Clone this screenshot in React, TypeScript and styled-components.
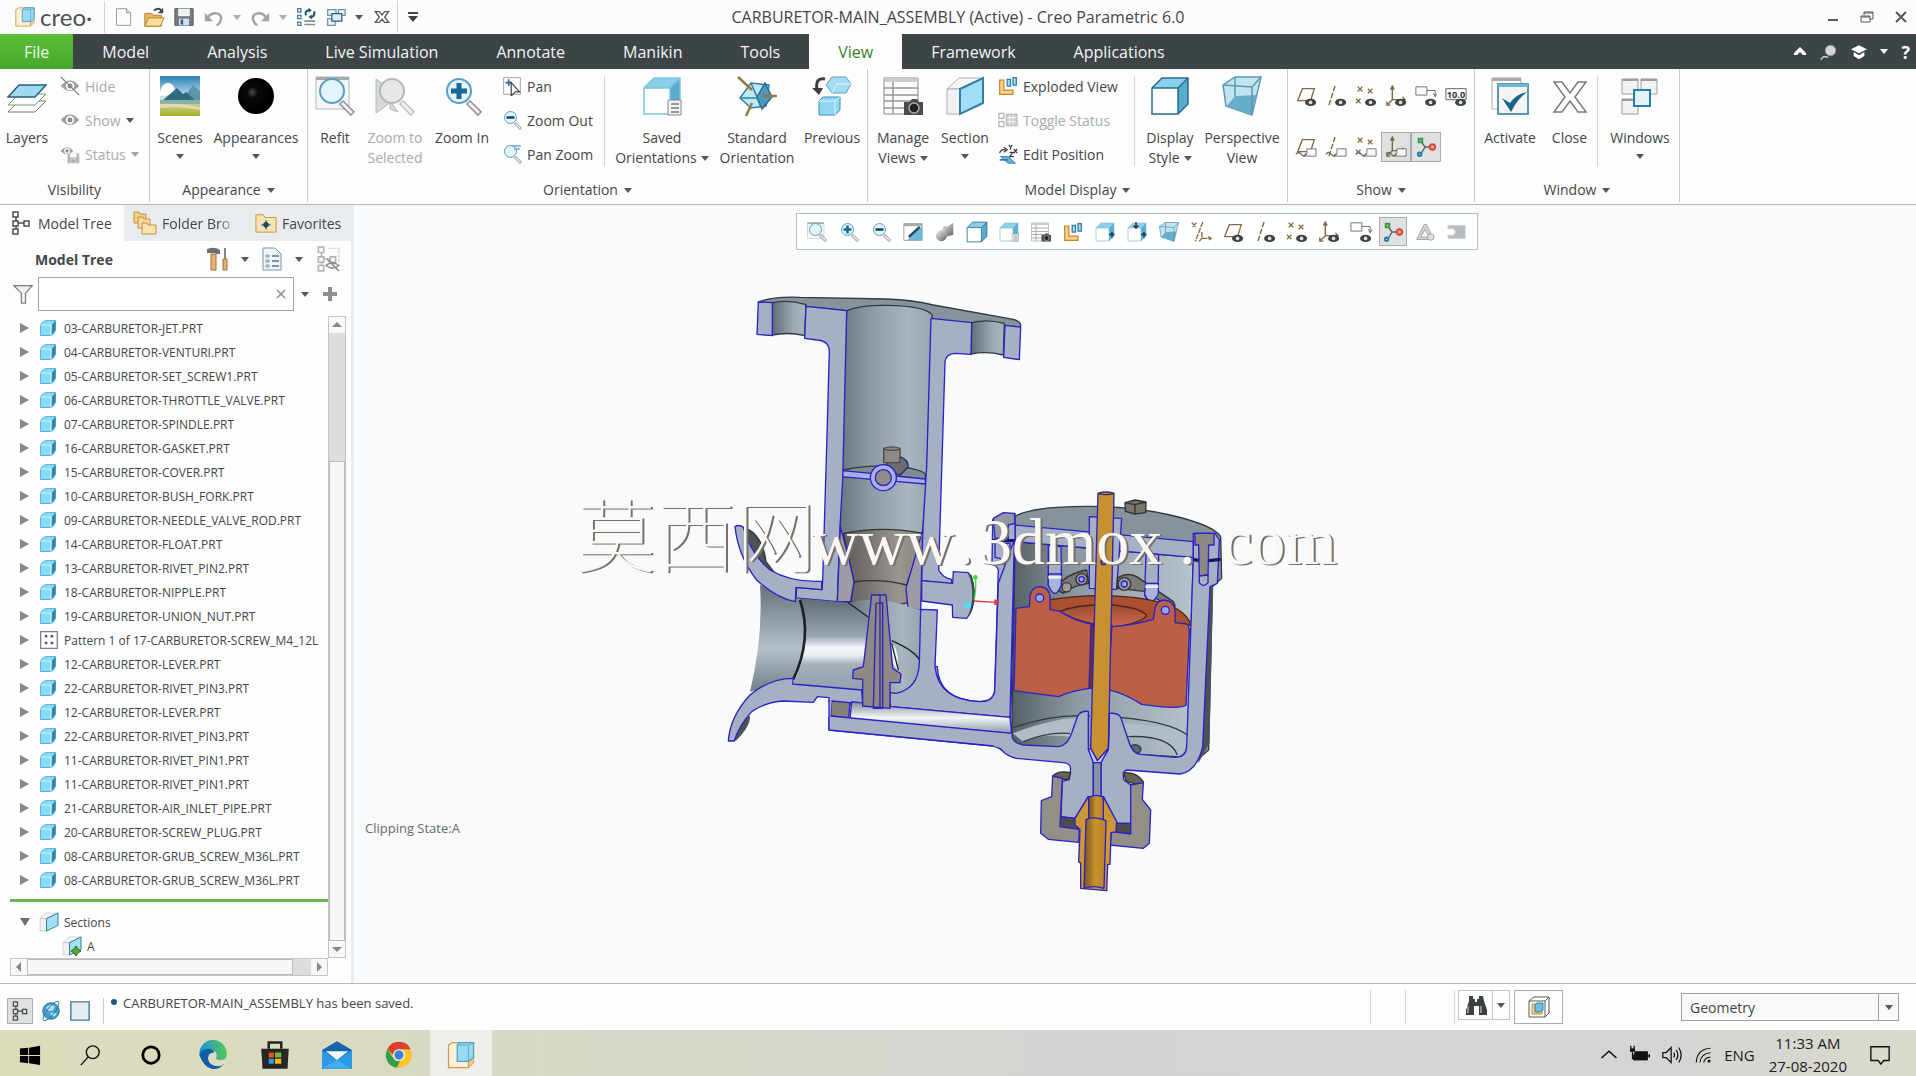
import type { ReactNode } from "react"
import styled, { createGlobalStyle, css } from "styled-components"

const sans = `"Open Sans", "Noto Sans", sans-serif`

const GlobalStyle = createGlobalStyle`
  * {
    box-sizing: border-box;
  }
  body {
    margin: 0;
    background: #fdfdfd;
    color: #434648;
    font-family: ${sans};
    font-size: 14px;
  }
  button, input, select {
    margin: 0;
    padding: 0;
    border: 0;
    background: none;
    color: inherit;
    font: inherit;
  }
  svg {
    display: block;
    flex: none;
  }
`

// shared parts
const Page = styled.div`
  display: flex;
  flex-direction: column;
  min-height: 100vh;
`

const Caret = styled.span<{ $color?: string }>`
  flex: none;
  border-top: 5px solid ${({ $color }) => $color ?? "#55595b"};
  border-left: 4px solid transparent;
  border-right: 4px solid transparent;
`

const Spacer = styled.div`
  flex: 1;
`

/* ---------- icons ---------- */

interface IconProps {
  size?: number
}

const Svg = ({
  size = 20,
  box = 24,
  children,
}: IconProps & { box?: number; children: ReactNode }) => (
  <svg
    width={size}
    height={size}
    viewBox={`0 0 ${box} ${box}`}
    fill="none"
    aria-hidden="true"
  >
    {children}
  </svg>
)

const CreoCube = ({ size = 22 }: IconProps) => (
  <Svg size={size}>
    <path d="M2 4l3-2h17v16l-4 4H2z" fill="#fdf0d6" stroke="#d09a55" />
    <path d="M18 17l4-3v4l-4 4z" fill="#f1c98a" />
    <path d="M9 4l2-2h11v12l-4 3H9z" fill="#9bdaf3" stroke="#4b9fc4" />
    <path d="M9 4h9v13M18 4l4-2" stroke="#5fb3d3" />
    <path d="M18 17v5" stroke="#d09a55" />
  </Svg>
)

const NewIcon = () => (
  <Svg>
    <path d="M3 2h12l5 5v15H3z" fill="#fbfbfd" stroke="#85898c" />
    <path d="M15 2v5h5" fill="#dfe3ea" stroke="#85898c" />
  </Svg>
)

const OpenIcon = () => (
  <Svg size={22}>
    <path d="M2 8h7l2 2h9v12H2z" fill="#e9b65f" stroke="#b07d2b" />
    <path d="M2 22l4-9h17l-4 9z" fill="#fbdf9d" stroke="#b07d2b" />
    <path d="M12 5q5-4 8 0" stroke="#444" strokeWidth="2" />
    <path d="M22 2v6h-6z" fill="#444" />
  </Svg>
)

const SaveIcon = () => (
  <Svg>
    <path d="M1 2h22v20H1z" fill="#777b80" stroke="#4a4d50" />
    <path d="M5 2h14v9H5z" fill="#f3f4f6" />
    <path d="M6 14h12v8H6z" fill="#cfe2f5" />
    <path d="M8 15h3v6H8z" fill="#31618f" />
  </Svg>
)

const UndoIcon = ({ flip }: { flip?: boolean }) => (
  <Svg>
    <g transform={flip ? "matrix(-1 0 0 1 24 0)" : undefined}>
      <path d="M5 12q5-6 11-4t4 8-5 5" stroke="#a0a4a6" strokeWidth="3" />
      <path d="M1 7v10h10z" fill="#a0a4a6" />
    </g>
  </Svg>
)

const RegenerateIcon = () => (
  <Svg>
    <path
      d="M2 2h4v4H2zM2 10h4v4H2zM2 18h4v4H2z"
      stroke="#3d7ba3"
      strokeWidth="1.5"
    />
    <path d="M10 17h13M10 21h13" stroke="#8a8e90" strokeWidth="2" />
    <path d="M12 10q-2-6 4-6M22 5q1 7-5 7" stroke="#28546f" strokeWidth="2.5" />
    <path d="M15 1l4 3-4 3zM19 9l-4 3 4 3z" fill="#28546f" />
  </Svg>
)

const WindowsSmallIcon = () => (
  <Svg>
    <path
      d="M2 3h10v7H2zM15 3h8v7h-8zM2 14h9v8H2z"
      fill="#eef4f8"
      stroke="#6d93a8"
      strokeWidth="1.5"
    />
    <path d="M7 8h12v9H7z" fill="#d5effa" stroke="#28607f" strokeWidth="1.5" />
  </Svg>
)

const CloseWindowIcon = () => (
  <Svg size={16}>
    <path
      d="M2 4h6l4 5 4-5h6l-6 8 6 8h-6l-4-5-4 5H2l6-8z"
      fill="#fff"
      stroke="#55595b"
      strokeWidth="2"
    />
  </Svg>
)

const CrossIcon = () => (
  <Svg size={40} box={40}>
    <path
      d="M4 6h8l8 11 8-11h8L25 21l11 15h-8l-8-11-8 11H4l11-15z"
      fill="#fff"
      stroke="#777b7d"
      strokeWidth="1.5"
    />
  </Svg>
)

const LayersIcon = () => (
  <Svg size={40} box={40}>
    <path d="M1 36l11-11h27l-11 11z" fill="#fff" stroke="#8b6f6f" />
    <path d="M1 29l11-11h27l-11 11z" fill="#fff" stroke="#6f9a7a" />
    <path
      d="M1 21l11-12h27l-11 12z"
      fill="#9fdaf3"
      stroke="#27617d"
      strokeWidth="1.5"
    />
  </Svg>
)

const EyeIcon = ({ slashed, disk }: { slashed?: boolean; disk?: boolean }) => (
  <Svg>
    <g transform={disk ? "scale(.7)" : undefined}>
      <path d="M1 12q11-13 22 0-11 12-22 0z" fill="#9da1a3" />
      <circle cx="12" cy="12" r="5" fill="#fff" />
      <circle cx="12" cy="12" r="3" fill="#8c9092" />
    </g>
    {slashed && <path d="M1 1l22 22" stroke="#7d8183" strokeWidth="1.5" />}
    {disk && (
      <path
        d="M9 11h14v12H9z M12 11v5h8v-5M13 23v-5h6v5"
        fill="#a9adaf"
        stroke="#dfe1e2"
      />
    )}
  </Svg>
)

const ScenesIcon = () => (
  <Svg size={40} box={40}>
    <defs>
      <linearGradient id="sky" x1="0" y1="0" x2="0" y2="1">
        <stop offset="0" stopColor="#2a80b8" />
        <stop offset=".55" stopColor="#cfe8ef" />
        <stop offset=".6" stopColor="#d9d2a6" />
        <stop offset="1" stopColor="#a6b52a" />
      </linearGradient>
    </defs>
    <path d="M0 0h40v40H0z" fill="url(#sky)" />
    <path d="M0 16q2-9 8-9t7 9q-4 4-15 4z" fill="#fff" />
    <path d="M22 24L33 9l7 6v9z" fill="#5c96ad" />
    <path d="M2 25l15-13 6 6 3-2 10 9z" fill="#2f6b80" />
    <path d="M0 24h40v4H0z" fill="#87b0a8" />
    <path d="M0 28q20-1 40 3v3q-20-4-40-2z" fill="#e7d7b2" />
  </Svg>
)

const BallIcon = () => (
  <Svg size={40} box={40}>
    <defs>
      <radialGradient id="ball" cx=".4" cy=".4" r=".5">
        <stop offset="0" stopColor="#4a4a4a" />
        <stop offset=".3" stopColor="#0a0a0a" />
        <stop offset="1" stopColor="#000" />
      </radialGradient>
    </defs>
    <circle cx="20" cy="20" r="18" fill="url(#ball)" />
  </Svg>
)

const Magnifier = ({
  size = 40,
  sign,
  frame,
  muted,
}: IconProps & {
  sign?: "plus" | "minus" | "move"
  frame?: boolean
  muted?: boolean
}) => (
  <Svg size={size} box={40}>
    {frame && (
      <>
        <path d="M1 1h33v32H1z" fill="#f4f6f7" stroke="#b3b7b9" />
        <path d="M1 1h33v3H1z" fill="#a7abad" />
      </>
    )}
    {muted && (
      <path d="M1 3l14 10v14L1 37zM15 25l8 11-8-3z" fill="#d7d9da" stroke="#b4b7b8" />
    )}
    <path
      d="M26 26l12 12"
      stroke={muted ? "#bfc1c2" : "#8c8f92"}
      strokeWidth="6"
    />
    <path d="M27 27l10 10" stroke="#f2f2f4" strokeWidth="3" />
    <circle
      cx="17"
      cy="15"
      r="12"
      fill={muted ? "#e6e7e8" : "#e3f5fc"}
      stroke={muted ? "#b4b7b8" : "#5c9dbf"}
      strokeWidth="2"
    />
    {sign === "plus" && (
      <path d="M17 7v16M9 15h16" stroke="#176a92" strokeWidth="5" />
    )}
    {sign === "minus" && <path d="M9 15h16" stroke="#17405c" strokeWidth="5" />}
    {sign === "move" && (
      <path d="M20 4h18M24 10h12" stroke="#6aa6cb" strokeWidth="3" />
    )}
  </Svg>
)

const PanIcon = () => (
  <Svg>
    <path d="M2 2h20v20H2z" fill="#fff" stroke="#8f9395" />
    <path d="M8 4v8M4 8h8" stroke="#2d6d92" strokeWidth="2" />
    <path d="M11 8l10 11h-5l-5 5z" fill="#fff" stroke="#444" strokeWidth="1.5" />
  </Svg>
)

const BoxIcon = ({
  size = 40,
  edge = "#2a6c8c",
  badge,
}: IconProps & {
  edge?: string
  badge?: "list" | "in" | "fit"
}) => (
  <Svg size={size} box={40}>
    <path d="M2 12L12 2h26v26L28 38H2z" fill="#8bd0ea" />
    <path d="M28 12l10-10v26L28 38z" fill="#57acd0" />
    <path d="M2 12h26v26H2z" fill="#fff" />
    <path
      d="M2 12L12 2h26v26L28 38H2zM2 12h26v26M28 12L38 2"
      stroke={edge}
      strokeWidth="1.5"
    />
    {badge === "list" && (
      <>
        <path d="M26 24h13v15H26z" fill="#f3f3f3" stroke="#85898b" />
        <path d="M29 28h8M29 32h8M29 36h8" stroke="#77797b" strokeWidth="1.5" />
      </>
    )}
    {badge && badge !== "list" && (
      <path d="M28 25h11M34 20v11" stroke="#1f3a4c" strokeWidth="3" />
    )}
    {badge === "fit" && (
      <path d="M18 0v12M13 7l5 5 5-5" stroke="#333" strokeWidth="3" />
    )}
  </Svg>
)

const SolidBoxIcon = () => (
  <Svg size={18}>
    <path d="M2 8q3-6 8-6h12v12q-1 6-6 8H2z" fill="#8adcf8" stroke="#3a9cc6" />
    <path d="M17 8l5-6v13l-6 7z" fill="#2f86ae" />
    <path d="M2 8h14v14" stroke="#c9f1fd" strokeWidth="1.5" />
  </Svg>
)

const OrientIcon = () => (
  <Svg size={40} box={40}>
    <path
      d="M3 22L14 7l18 2-3 21-15 2z"
      fill="#bfe7f6"
      stroke="#2f7fa3"
      strokeWidth="1.5"
    />
    <path
      d="M20 21l8-14 7 14-10 12z"
      fill="#4d99bf"
      stroke="#2a6c8c"
      strokeWidth="1.5"
    />
    <path d="M3 22h17l5 11M20 21L14 7" stroke="#2f7fa3" strokeWidth="1.5" />
    <path d="M1 1l14 13M25 20h15M15 27l-6 13" stroke="#96793c" strokeWidth="2.5" />
  </Svg>
)

const PreviousIcon = () => (
  <Svg size={40} box={40}>
    <path d="M14 9l6-8h14l5 7-5 9H20z" fill="#a4def4" stroke="#5e9fbf" />
    <path d="M20 17l5-9h14" stroke="#e3f7fd" />
    <path d="M7 25l4-4h17v13l-5 5H7z" fill="#8fd8f3" stroke="#3f8fb4" />
    <path d="M7 25h16v14M23 25l5-4" stroke="#d8f4fd" />
    <path d="M13 3Q3 1 5 14" stroke="#3b3e40" strokeWidth="3" />
    <path d="M0 12h11l-4 7z" fill="#3b3e40" />
  </Svg>
)

const ManageViewsIcon = ({ size = 40 }: IconProps) => (
  <Svg size={size} box={40}>
    <path d="M1 2h34v36H1z" fill="#fbfbfb" stroke="#86898b" />
    <path d="M1 2h34v4H1z" fill="#c9cbcd" />
    <path
      d="M1 12h34M1 19h34M1 25h34M1 32h34M10 6v32"
      stroke="#95989a"
      strokeWidth="1.5"
    />
    <path d="M21 26h5l3-3h5l2 3h4v13H21z" fill="#4a4d4f" />
    <circle cx="31" cy="32" r="5" fill="#222" stroke="#aaa" strokeWidth="1.5" />
  </Svg>
)

const SectionIcon = ({ size = 40, green }: IconProps & { green?: boolean }) => (
  <Svg size={size} box={40}>
    <path d="M2 13L14 2h24L15 13z" fill="#f6f6f6" stroke="#aaadaf" />
    <path d="M2 13h13v25H2z" fill="#f1f1f1" stroke="#aaadaf" />
    <path
      d="M15 13L38 2v25L15 38z"
      fill="#a0dff6"
      stroke="#357e9f"
      strokeWidth="2"
    />
    {green && (
      <path
        d="M28 20l4 6 6 4-6 4-4 6-4-6-6-4 6-4z"
        fill="#5aa62e"
        stroke="#2c6a10"
        strokeWidth="2"
      />
    )}
  </Svg>
)

const ExplodedIcon = () => (
  <Svg>
    <path
      d="M2 5h5v12h11v5H2z"
      fill="#fbd08a"
      stroke="#c98832"
      strokeWidth="1.5"
    />
    <path
      d="M11 4h4v8h-4zM18 2h4v9h-4z"
      fill="#9fdcf5"
      stroke="#2f7fa3"
      strokeWidth="1.5"
    />
  </Svg>
)

const ToggleStatusIcon = () => (
  <Svg>
    <path d="M10 5h13v14H10z" fill="#c9cbcc" stroke="#afb2b3" />
    <path d="M14 6v12M18 6v12M11 9h11M11 14h11" stroke="#fff" />
    <path d="M1 4h6v6H1zM1 14h6v6H1z" stroke="#b2b5b6" strokeWidth="1.5" />
  </Svg>
)

const EditPositionIcon = () => (
  <Svg>
    <path d="M3 15h9l9 8h-9z" fill="#5eb4d8" stroke="#2d7ea2" />
    <path d="M2 19h10" stroke="#2d7ea2" strokeWidth="2" />
    <path
      d="M2 11q1-5 7-4M7 4l4 3-4 3M13 1l2 3 2-3M15 4v3M19 6l4 5M23 6l-4 5M14 10h4l-4 5h5"
      stroke="#3c4042"
      strokeWidth="1.5"
    />
  </Svg>
)

const PerspectiveIcon = ({ size = 40 }: IconProps) => (
  <Svg size={size} box={40}>
    <path
      d="M1 9L13 1h26l-9 38L4 30z"
      fill="#c2e4ef"
      stroke="#5b98b2"
      strokeWidth="1.5"
    />
    <path d="M5 30l8-10 22-1-5 20z" fill="#66adc9" />
    <path d="M1 9l29 2 9-10M30 11v28M13 1v19" stroke="#5b98b2" strokeWidth="1.5" />
  </Svg>
)

type DatumKind = "plane" | "axis" | "point" | "csys" | "note" | "dim" | "all"

const Datum = ({
  size = 22,
  kind,
  mark,
}: IconProps & { kind: DatumKind; mark?: "eye" | "tag" }) => (
  <Svg size={size}>
    {kind === "plane" && (
      <path d="M8 4h13l-4 13H3z" stroke="#876b43" strokeWidth="1.5" />
    )}
    {kind === "axis" && (
      <path d="M11 1L4 23" stroke="#77682f" strokeWidth="1.5" strokeDasharray="6 2" />
    )}
    {kind === "point" && (
      <path
        d="M3 2l5 5M8 2L3 7M14 4l5 5M19 4l-5 5M1 15l5 5M6 15l-5 5"
        stroke="#8a7440"
        strokeWidth="1.5"
      />
    )}
    {kind === "csys" && (
      <path
        d="M8 16V2M6 5l2-4 2 4M8 16h14M19 13l3 3-3 3M8 16l-5 5M2 18v4h4"
        stroke="#7d6a44"
        strokeWidth="1.5"
      />
    )}
    {kind === "note" && (
      <path d="M1 2h12v9H1zM13 6h9v6M20 9l2 4 2-4" stroke="#66696b" />
    )}
    {kind === "dim" && (
      <>
        <path d="M1 4h22v12H1z" stroke="#55585a" />
        <text
          x="12"
          y="14"
          fontSize="10"
          fontWeight="700"
          textAnchor="middle"
          fill="#333"
        >
          10.0
        </text>
      </>
    )}
    {kind === "all" && (
      <path
        d="M2 2l5 5M7 2L2 7M14 1L6 22M13 12v7h9M13 19l-3 3M20 17l3 2-3 2"
        stroke="#846f3c"
        strokeWidth="1.5"
        strokeDasharray="6 1"
      />
    )}
    {mark === "eye" && (
      <>
        <ellipse cx="17" cy="19" rx="6" ry="4" fill="#3e4244" />
        <circle cx="17" cy="19" r="2" fill="#d8dadb" />
      </>
    )}
    {mark === "tag" && (
      <>
        <path d="M13 14h10v8H9l4-4z" fill="#fafafa" stroke="#6d7072" />
        <path d="M1 20q3-4 6 0t6-1" stroke="#6d7072" strokeWidth="1.5" />
      </>
    )}
  </Svg>
)

const SpinCenterIcon = () => (
  <Svg size={22}>
    <path d="M6 5l5 7-5 8M11 12h6" stroke="#5b6063" strokeWidth="1.5" />
    <path d="M4 3h4v4H4z" fill="#8ed08e" stroke="#3f9a45" strokeWidth="2" />
    <circle cx="19" cy="12" r="3" fill="#f2a49c" stroke="#d3483d" strokeWidth="2" />
    <circle cx="5" cy="20" r="2" fill="#8bc3e4" stroke="#2b78a8" strokeWidth="2" />
  </Svg>
)

const ActivateIcon = () => (
  <Svg size={40} box={40}>
    <path d="M2 2h29v31H2z" fill="#fbfbfb" stroke="#a9acae" />
    <path d="M2 2h29v3H2z" fill="#a9acae" />
    <path d="M8 8h30v30H8z" fill="#f2f4f5" stroke="#2b7698" strokeWidth="1.5" />
    <path d="M8 8h30v3H8z" fill="#6fb6d3" />
    <path d="M12 22l8 5q6-9 17-11-9 6-16 20z" fill="#176587" />
  </Svg>
)

const WindowsIcon = () => (
  <Svg size={40} box={40}>
    <path
      d="M2 3h16v15H2zM21 3h16v15H21zM2 23h16v15H2z"
      fill="#f3f3f5"
      stroke="#9a9da0"
    />
    <path d="M2 3h16v2H2zM21 3h16v2H21zM2 23h16v2H2z" fill="#9a9da0" />
    <path d="M14 14h16v16H14z" fill="#e2f4fb" stroke="#2a7ea4" strokeWidth="2" />
  </Svg>
)

const TreeIcon = ({ size = 22, muted }: IconProps & { muted?: boolean }) => (
  <Svg size={size}>
    <path
      d="M4 1h5v5H4zM4 10h5v5H4zM4 18h5v5H4zM15 10h5v5h-5zM7 6v4M7 15v3M9 12h6"
      stroke={muted ? "#b2b5b6" : "#4b4e50"}
      strokeWidth="1.5"
    />
    {muted && (
      <>
        <path d="M13 2h10v14" stroke="#c8cacb" strokeDasharray="3 1" />
        <path
          d="M11 18q6-5 12 0-6 5-12 0zM12 12l11 11"
          stroke="#8c8f91"
          strokeWidth="1.5"
        />
      </>
    )}
  </Svg>
)

const FoldersIcon = () => (
  <Svg size={24}>
    <path d="M1 1h5l1 2h6v9H1z" fill="#f5cf86" stroke="#c29040" />
    <path d="M5 6h5l1 2h6v9H5z" fill="#f8d999" stroke="#c29040" />
    <path d="M9 12h5l1 2h8v9H9z" fill="#fbe3af" stroke="#c29040" />
  </Svg>
)

const FavoriteIcon = () => (
  <Svg size={22}>
    <path d="M1 3h8l2 3h12v16H1z" fill="#f9e3b0" stroke="#c29040" />
    <path d="M12 9v10M7 14h10" stroke="#2c6b96" strokeWidth="1.5" />
    <circle cx="12" cy="14" r="3" fill="#17486b" />
  </Svg>
)

const ToolsIcon = () => (
  <Svg size={24}>
    <path d="M1 2q8-3 13 1v4H10V6H1z" fill="#6d7173" />
    <path d="M5 7h5v16H5z" fill="#e0b477" stroke="#a06e2a" />
    <path d="M19 1v12" stroke="#85898b" strokeWidth="2" />
    <path d="M17 12h4v11h-4z" fill="#e0b477" stroke="#a06e2a" />
  </Svg>
)

const ListIcon = () => (
  <Svg size={24}>
    <path d="M3 1h12l6 6v16H3z" fill="#f0f5f9" stroke="#7f939f" />
    <path d="M12 9h7M12 14h7M12 19h7" stroke="#4a7793" strokeWidth="1.5" />
    <path d="M6 8h3v2H6zM6 13h3v2H6zM6 18h3v2H6z" stroke="#7f939f" />
  </Svg>
)

const FunnelIcon = () => (
  <Svg>
    <path
      d="M1 2h22l-8 9v12h-5V11z"
      fill="#f1f1f1"
      stroke="#7b7e80"
      strokeWidth="1.5"
    />
  </Svg>
)

const PatternIcon = () => (
  <Svg>
    <path d="M2 2h20v20H2z" fill="#fff" stroke="#7f75a3" strokeWidth="1.5" />
    <path d="M7 6h3v3H7zM14 6h3v3h-3zM7 14h3v3H7zM14 14h3v3h-3z" fill="#54517a" />
  </Svg>
)

const GlobeIcon = () => (
  <Svg size={22}>
    <circle cx="12" cy="12" r="9" fill="#4aa0cc" stroke="#1e6a94" />
    <path d="M7 8q4-5 9-1-1 5-5 5t-4-4zM11 15q4-3 7 0-3 6-7 0z" fill="#b4e2f3" />
    <ellipse
      cx="12"
      cy="12"
      rx="13"
      ry="4"
      transform="rotate(-52 12 12)"
      stroke="#2a7ca6"
    />
  </Svg>
)

const BlankIcon = () => (
  <Svg size={22}>
    <path d="M2 2h20v20H2z" fill="#e4ebf1" stroke="#3f7ba0" strokeWidth="1.5" />
  </Svg>
)

const BinocularsIcon = () => (
  <Svg size={24}>
    <path
      d="M5 3h4v3h2v3h2V6h2V3h4l1 5 3 9v5h-8v-9h-5v9H2v-5l3-9z"
      fill="#3c4042"
    />
    <path d="M4 13v7M17 13v7" stroke="#8b8f91" strokeWidth="2" />
  </Svg>
)

const RepaintIcon = () => (
  <Svg>
    <path d="M1 2h22v20H1z" fill="#fff" stroke="#8d9092" />
    <path d="M1 2h22v3H1z" fill="#a7abad" />
    <path d="M23 5v17H5z" fill="#6fb8da" />
    <path d="M7 18L20 6" stroke="#1f506b" strokeWidth="3" />
  </Svg>
)

const ShadeIcon = () => (
  <Svg size={22}>
    <defs>
      <linearGradient id="shade" x1="0" y1="0" x2="1" y2="1">
        <stop offset="0" stopColor="#f2f2f2" />
        <stop offset="1" stopColor="#5c5f61" />
      </linearGradient>
    </defs>
    <circle cx="8" cy="16" r="6" fill="url(#shade)" />
    <path d="M9 9q0-5 6-3l6-4v13l-7 2q-5-3-5-8z" fill="url(#shade)" />
  </Svg>
)

const RenderIcon = () => (
  <Svg>
    <path
      d="M11 3h3l8 18H2zM12 9l-5 9h10z"
      fill="#cfd1d2"
      stroke="#999c9e"
      fillRule="evenodd"
    />
    <circle cx="19" cy="18" r="4" fill="#dfe0e1" stroke="#999c9e" />
  </Svg>
)

const PipeIcon = () => (
  <Svg>
    <path d="M1 4h21v16H1v-4h6q6-4 0-8H1z" fill="#b9bcbe" stroke="#d7d9da" />
  </Svg>
)

const LayeredBoxIcon = () => (
  <Svg size={24}>
    <path d="M2 6l5-4h15v16l-4 4H2z" fill="#fff" stroke="#55585a" />
    <path d="M2 6h16v16M18 6l4-4" stroke="#55585a" />
    <path d="M5 9h10v10H5z" fill="#fbd08a" stroke="#c98832" />
    <path d="M8 10l2-2h6v7l-3 2H8z" fill="#6fc0e2" stroke="#2f7fa3" />
  </Svg>
)

/* ---------- title bar ---------- */

const TitleBar = styled.header`
  display: flex;
  align-items: center;
  height: 34px;
  background: #fcfcfc;
`

const TitleSide = styled.div<{ $end?: boolean }>`
  display: flex;
  flex: 1;
  align-items: center;
  justify-content: ${({ $end }) => ($end ? "flex-end" : "flex-start")};
  gap: ${({ $end }) => ($end ? "16px" : "0")};
  padding: 0 6px 0 14px;
`

const Title = styled.h1`
  margin: 0;
  font-size: 16px;
  font-weight: 400;
`

const Brand = styled.div`
  display: flex;
  align-items: center;
  gap: 4px;
  width: 90px;
  color: #4c5052;
  font-family: Lato, sans-serif;
  font-size: 24px;
  line-height: 28px;
`

const QuickTools = styled.div`
  display: flex;
  align-items: center;
  height: 32px;
  padding-left: 4px;
  border-left: 1px solid #cfd1d2;
  border-right: 1px solid #cfd1d2;
`

const QuickButton = styled.button<{ $narrow?: boolean }>`
  display: grid;
  place-items: center;
  width: ${({ $narrow }) => ($narrow ? "16px" : "30px")};
  height: 28px;
`

const WindowButton = styled.button`
  display: grid;
  place-items: center;
  width: 18px;
  height: 28px;
`

const quickTools: { label: string; icon: ReactNode; narrow?: boolean }[] = [
  { label: "New", icon: <NewIcon /> },
  { label: "Open", icon: <OpenIcon /> },
  { label: "Save", icon: <SaveIcon /> },
  { label: "Undo", icon: <UndoIcon /> },
  { label: "Undo list", icon: <Caret $color="#a9acae" />, narrow: true },
  { label: "Redo", icon: <UndoIcon flip /> },
  { label: "Redo list", icon: <Caret $color="#a9acae" />, narrow: true },
  { label: "Regenerate", icon: <RegenerateIcon /> },
  { label: "Windows", icon: <WindowsSmallIcon /> },
  { label: "Windows list", icon: <Caret />, narrow: true },
  { label: "Close window", icon: <CloseWindowIcon /> },
]

/* ---------- ribbon ---------- */

const TabBar = styled.nav`
  display: flex;
  align-items: stretch;
  height: 35px;
  background: #3c4446;
  color: #f4f5f5;
`

const RibbonTab = styled.button<{ $variant?: "file" | "active" }>`
  padding: 0 29px;
  font-size: 16px;
  line-height: 24px;
  ${({ $variant }) =>
    $variant === "file" &&
    css`
      padding: 0 24px;
      background: linear-gradient(#59bd38, #47a92a);
    `}
  ${({ $variant }) =>
    $variant === "active" &&
    css`
      background: #fdfdfd;
      color: #3f7d2c;
    `}
`

const TabBarTools = styled.div`
  display: flex;
  align-items: center;
  gap: 13px;
  padding-right: 6px;
`

const TabBarButton = styled.button`
  display: grid;
  place-items: center;
  color: #fff;
  font-size: 18px;
  font-weight: 700;
  line-height: 24px;
`

const Ribbon = styled.section`
  display: flex;
  height: 136px;
  border-bottom: 1px solid #b4b6b7;
  background: #fdfdfd;
`

const Group = styled.div<{ $width: number }>`
  display: flex;
  flex-direction: column;
  width: ${({ $width }) => $width}px;
  margin-bottom: 2px;
  border-right: 1px solid #c6c8c9;
`

const GroupBody = styled.div`
  display: flex;
  flex: 1;
`

const GroupLabel = styled.div`
  display: flex;
  align-items: center;
  justify-content: center;
  gap: 6px;
  height: 24px;
  line-height: 24px;
`

const Divider = styled.div`
  width: 1px;
  height: 90px;
  margin: 7px 3px 0;
  background: #d3d5d6;
`

const BigButtonBox = styled.button<{ $width: number }>`
  display: flex;
  flex-direction: column;
  align-items: center;
  width: ${({ $width }) => $width}px;
  padding-top: 7px;
  line-height: 20px;
  white-space: nowrap;

  &:disabled {
    color: #a9acad;
  }
`

const BigLabel = styled.span`
  margin-top: 12px;
`

const BigLine = styled.span`
  display: flex;
  align-items: center;
  gap: 4px;
  min-height: 16px;
`

const SmallColumn = styled.div<{ $width: number }>`
  display: flex;
  flex-direction: column;
  width: ${({ $width }) => $width}px;
  padding-left: 6px;
`

const SmallButtonBox = styled.button`
  display: flex;
  align-items: center;
  gap: 5px;
  height: 34px;
  white-space: nowrap;

  &:disabled {
    color: #a9acad;
  }
`

const ShowGrid = styled.div`
  display: grid;
  grid-template-columns: repeat(6, 30px);
  grid-auto-rows: 30px;
  row-gap: 21px;
  padding: 12px 0 0 3px;
`

const ToggleButton = styled.button<{ $on?: boolean }>`
  display: grid;
  place-items: center;
  ${({ $on }) =>
    $on &&
    css`
      border: 1px solid #a9acad;
      background: #dfe0e0;
    `}
`

interface BigButtonProps {
  icon: ReactNode
  label: string
  second?: string
  menu?: boolean
  width: number
  disabled?: boolean
}

const BigButton = ({ icon, label, second, menu, width, disabled }: BigButtonProps) => (
  <BigButtonBox $width={width} disabled={disabled}>
    {icon}
    <BigLabel>{label}</BigLabel>
    <BigLine>
      {second}
      {menu && <Caret />}
    </BigLine>
  </BigButtonBox>
)

interface SmallButtonProps {
  icon: ReactNode
  label: string
  caret?: string
  disabled?: boolean
}

const SmallButton = ({ icon, label, caret, disabled }: SmallButtonProps) => (
  <SmallButtonBox disabled={disabled}>
    {icon}
    {label}
    {caret && <Caret $color={caret} />}
  </SmallButtonBox>
)

const datumKinds: DatumKind[] = ["plane", "axis", "point", "csys", "note", "dim"]

const RibbonGroups = () => (
  <Ribbon aria-label="View">
    <Group $width={150}>
      <GroupBody>
        <BigButton icon={<LayersIcon />} label="Layers" width={54} />
        <SmallColumn $width={94}>
          <SmallButton icon={<EyeIcon slashed />} label="Hide" disabled />
          <SmallButton icon={<EyeIcon />} label="Show" caret="#55595b" disabled />
          <SmallButton icon={<EyeIcon disk />} label="Status" caret="#a0a3a4" disabled />
        </SmallColumn>
      </GroupBody>
      <GroupLabel>Visibility</GroupLabel>
    </Group>
    <Group $width={158}>
      <GroupBody>
        <BigButton icon={<ScenesIcon />} label="Scenes" menu width={60} />
        <BigButton icon={<BallIcon />} label="Appearances" menu width={92} />
      </GroupBody>
      <GroupLabel>
        Appearance <Caret />
      </GroupLabel>
    </Group>
    <Group $width={560}>
      <GroupBody>
        <BigButton icon={<Magnifier frame />} label="Refit" width={54} />
        <BigButton
          icon={<Magnifier muted />}
          label="Zoom to"
          second="Selected"
          width={66}
          disabled
        />
        <BigButton icon={<Magnifier sign="plus" />} label="Zoom In" width={68} />
        <SmallColumn $width={105}>
          <SmallButton icon={<PanIcon />} label="Pan" />
          <SmallButton icon={<Magnifier size={20} sign="minus" />} label="Zoom Out" />
          <SmallButton icon={<Magnifier size={20} sign="move" />} label="Pan Zoom" />
        </SmallColumn>
        <Divider />
        <BigButton
          icon={<BoxIcon edge="#7fc3dd" badge="list" />}
          label="Saved"
          second="Orientations"
          menu
          width={108}
        />
        <BigButton
          icon={<OrientIcon />}
          label="Standard"
          second="Orientation"
          width={82}
        />
        <BigButton icon={<PreviousIcon />} label="Previous" width={68} />
      </GroupBody>
      <GroupLabel>
        Orientation <Caret />
      </GroupLabel>
    </Group>
    <Group $width={420}>
      <GroupBody>
        <BigButton
          icon={<ManageViewsIcon />}
          label="Manage"
          second="Views"
          menu
          width={70}
        />
        <BigButton icon={<SectionIcon />} label="Section" menu width={54} />
        <SmallColumn $width={139}>
          <SmallButton icon={<ExplodedIcon />} label="Exploded View" />
          <SmallButton icon={<ToggleStatusIcon />} label="Toggle Status" disabled />
          <SmallButton icon={<EditPositionIcon />} label="Edit Position" />
        </SmallColumn>
        <Divider />
        <BigButton icon={<BoxIcon />} label="Display" second="Style" menu width={64} />
        <BigButton
          icon={<PerspectiveIcon />}
          label="Perspective"
          second="View"
          width={80}
        />
      </GroupBody>
      <GroupLabel>
        Model Display <Caret />
      </GroupLabel>
    </Group>
    <Group $width={187}>
      <GroupBody>
        <ShowGrid>
          {datumKinds.map((kind) => (
            <ToggleButton key={kind} aria-label={`Show ${kind}`}>
              <Datum kind={kind} mark="eye" />
            </ToggleButton>
          ))}
          {datumKinds.slice(0, 4).map((kind) => (
            <ToggleButton
              key={kind}
              $on={kind === "csys"}
              aria-label={`Show ${kind} tags`}
            >
              <Datum kind={kind} mark="tag" />
            </ToggleButton>
          ))}
          <ToggleButton $on aria-label="Spin center">
            <SpinCenterIcon />
          </ToggleButton>
        </ShowGrid>
      </GroupBody>
      <GroupLabel>
        Show <Caret />
      </GroupLabel>
    </Group>
    <Group $width={205}>
      <GroupBody>
        <BigButton icon={<ActivateIcon />} label="Activate" width={70} />
        <BigButton icon={<CrossIcon />} label="Close" width={49} />
        <Divider />
        <BigButton icon={<WindowsIcon />} label="Windows" menu width={78} />
      </GroupBody>
      <GroupLabel>
        Window <Caret />
      </GroupLabel>
    </Group>
  </Ribbon>
)

/* ---------- model tree ---------- */

const Workspace = styled.div`
  display: flex;
  flex: 1;
`

const SidePanel = styled.aside`
  display: flex;
  flex-direction: column;
  width: 354px;
  border-right: 3px solid #e8ecef;
  background: #fdfdfd;
`

const PanelTabs = styled.div`
  display: flex;
  height: 36px;
  background: #e8ecee;
`

const PanelTab = styled.button<{ $active?: boolean }>`
  display: flex;
  align-items: center;
  gap: 5px;
  width: ${({ $active }) => ($active ? "124px" : "auto")};
  padding: 0 9px;
  ${({ $active }) => $active && "background: #fdfdfd;"}
`

const PanelTabText = styled.span<{ $fade?: boolean }>`
  white-space: nowrap;
  ${({ $fade }) =>
    $fade &&
    css`
      width: 75px;
      text-align: left;
      mask-image: linear-gradient(90deg, #000 75%, transparent);
    `}
`

const PanelHeader = styled.div`
  display: flex;
  align-items: center;
  gap: 11px;
  height: 36px;
  padding: 0 11px 0 35px;
`

const PanelTitle = styled.h2`
  flex: 1;
  margin: 0;
  font-size: 14px;
  font-weight: 700;
`

const IconButton = styled.button`
  display: grid;
  place-items: center;
`

const SearchRow = styled.div`
  display: flex;
  align-items: center;
  gap: 5px;
  padding: 0 14px 5px 13px;
`

const SearchBox = styled.div`
  display: flex;
  flex: 1;
  height: 34px;
  margin-right: 2px;
  border: 1px solid #9fa3a5;
  background: #fff;
`

const SearchInput = styled.input`
  flex: 1;
  min-width: 0;
  padding: 0 6px;
`

const PlusButton = styled(IconButton)`
  margin-left: 9px;
  color: #8b8f91;
`

const ClearButton = styled(IconButton)`
  width: 24px;
`

const TreeFrame = styled.div`
  display: grid;
  grid-template-columns: minmax(0, 1fr) 18px;
  grid-template-rows: 1fr 18px;
  flex: 1;
  margin: 0 5px 7px 10px;
`

const TreeList = styled.ul`
  margin: 0;
  padding: 0;
  overflow: hidden;
  list-style: none;
  font-size: 12px;
`

const TreeRow = styled.li<{ $indent?: boolean }>`
  display: flex;
  align-items: center;
  height: 24px;
  padding-left: ${({ $indent }) => ($indent ? "52px" : "9px")};
  white-space: nowrap;
`

const Expander = styled.button<{ $open?: boolean }>`
  flex: none;
  width: 20px;
  height: 20px;

  &::before {
    content: "";
    display: block;
    width: 0;
    margin-left: 1px;
    border: 5px solid transparent;
    ${({ $open }) =>
      $open
        ? "border-top: 8px solid #6d7072; border-bottom: 0;"
        : "border-left: 9px solid #858889; border-right: 0;"}
  }
`

const RowIcon = styled.span`
  display: grid;
  flex: none;
  place-items: center start;
  width: 25px;
`

const InsertLine = styled.li`
  height: 3px;
  margin: 7px 0 8px;
  background: #6bb853;
`

const ScrollTrack = styled.div<{ $across?: boolean }>`
  display: flex;
  flex-direction: ${({ $across }) => ($across ? "row" : "column")};
  border: 1px solid #c3c5c6;
  background: #dcdddd;
`

const ScrollEnd = styled.button`
  display: grid;
  place-items: center;
  flex: none;
  width: 16px;
  height: 16px;
  background: #f8f8f8;
`

const ScrollThumb = styled.div`
  flex: 15;
  border: 1px solid #b9bbbc;
  background: #f8f8f8;
`

const ScrollGap = styled.div<{ $grow: number }>`
  flex: ${({ $grow }) => $grow};
`

const Arrow = ({ turn }: { turn: number }) => (
  <Svg size={10} box={10}>
    <path d="M0 7l5-5 5 5z" fill="#85898a" transform={`rotate(${turn} 5 5)`} />
  </Svg>
)

const parts = [
  "03-CARBURETOR-JET.PRT",
  "04-CARBURETOR-VENTURI.PRT",
  "05-CARBURETOR-SET_SCREW1.PRT",
  "06-CARBURETOR-THROTTLE_VALVE.PRT",
  "07-CARBURETOR-SPINDLE.PRT",
  "16-CARBURETOR-GASKET.PRT",
  "15-CARBURETOR-COVER.PRT",
  "10-CARBURETOR-BUSH_FORK.PRT",
  "09-CARBURETOR-NEEDLE_VALVE_ROD.PRT",
  "14-CARBURETOR-FLOAT.PRT",
  "13-CARBURETOR-RIVET_PIN2.PRT",
  "18-CARBURETOR-NIPPLE.PRT",
  "19-CARBURETOR-UNION_NUT.PRT",
  "Pattern 1 of 17-CARBURETOR-SCREW_M4_12L",
  "12-CARBURETOR-LEVER.PRT",
  "22-CARBURETOR-RIVET_PIN3.PRT",
  "12-CARBURETOR-LEVER.PRT",
  "22-CARBURETOR-RIVET_PIN3.PRT",
  "11-CARBURETOR-RIVET_PIN1.PRT",
  "11-CARBURETOR-RIVET_PIN1.PRT",
  "21-CARBURETOR-AIR_INLET_PIPE.PRT",
  "20-CARBURETOR-SCREW_PLUG.PRT",
  "08-CARBURETOR-GRUB_SCREW_M36L.PRT",
  "08-CARBURETOR-GRUB_SCREW_M36L.PRT",
]

const ModelTree = () => (
  <SidePanel>
    <PanelTabs>
      <PanelTab $active>
        <TreeIcon size={24} />
        <PanelTabText>Model Tree</PanelTabText>
      </PanelTab>
      <PanelTab>
        <FoldersIcon />
        <PanelTabText $fade>Folder Bro</PanelTabText>
      </PanelTab>
      <PanelTab>
        <FavoriteIcon />
        <PanelTabText>Favorites</PanelTabText>
      </PanelTab>
    </PanelTabs>
    <PanelHeader>
      <PanelTitle>Model Tree</PanelTitle>
      <IconButton aria-label="Settings">
        <ToolsIcon />
      </IconButton>
      <Caret />
      <IconButton aria-label="Show">
        <ListIcon />
      </IconButton>
      <Caret />
      <IconButton aria-label="Tree filters">
        <TreeIcon size={26} muted />
      </IconButton>
    </PanelHeader>
    <SearchRow>
      <FunnelIcon />
      <SearchBox>
        <SearchInput aria-label="Search tree" />
        <ClearButton aria-label="Clear">
          <Svg size={10} box={10}>
            <path d="M1 1l8 8M9 1L1 9" stroke="#8b8f91" strokeWidth="1.5" />
          </Svg>
        </ClearButton>
      </SearchBox>
      <Caret />
      <PlusButton aria-label="Add">
        <Svg size={14} box={14}>
          <path d="M7 0v14M0 7h14" stroke="#8b8f91" strokeWidth="4" />
        </Svg>
      </PlusButton>
    </SearchRow>
    <TreeFrame>
      <TreeList>
        {parts.map((part, index) => (
          <TreeRow key={index}>
            <Expander aria-label="Expand" />
            <RowIcon>
              {part.startsWith("Pattern") ? <PatternIcon /> : <SolidBoxIcon />}
            </RowIcon>
            {part}
          </TreeRow>
        ))}
        <InsertLine />
        <TreeRow>
          <Expander $open aria-label="Collapse" />
          <RowIcon>
            <SectionIcon size={20} />
          </RowIcon>
          Sections
        </TreeRow>
        <TreeRow $indent>
          <RowIcon>
            <SectionIcon size={20} green />
          </RowIcon>
          A
        </TreeRow>
      </TreeList>
      <ScrollTrack>
        <ScrollEnd aria-label="Scroll up">
          <Arrow turn={0} />
        </ScrollEnd>
        <ScrollGap $grow={4} />
        <ScrollThumb />
        <ScrollEnd aria-label="Scroll down">
          <Arrow turn={180} />
        </ScrollEnd>
      </ScrollTrack>
      <ScrollTrack $across>
        <ScrollEnd aria-label="Scroll left">
          <Arrow turn={-90} />
        </ScrollEnd>
        <ScrollThumb />
        <ScrollGap $grow={1} />
        <ScrollEnd aria-label="Scroll right">
          <Arrow turn={90} />
        </ScrollEnd>
      </ScrollTrack>
    </TreeFrame>
  </SidePanel>
)

/* ---------- graphics area ---------- */

const Viewport = styled.main`
  position: relative;
  flex: 1;
  padding: 8px 0 0 4px;
  background: #f8fafc;
`

const Scene = styled.svg`
  position: absolute;
  inset: 0;
  width: 100%;
  height: 100%;
`

const FloatingBar = styled.div`
  position: relative;
  display: flex;
  gap: 4px;
  width: max-content;
  margin: 0 auto;
  padding: 3px 6px;
  border: 1px solid #b5bfc4;
  background: #fff;
`

const FloatingButton = styled(ToggleButton)`
  width: 28px;
  height: 29px;
`

const ClippingState = styled.p`
  position: absolute;
  bottom: 145px;
  left: 11px;
  margin: 0;
  color: #666a6d;
  font-size: 13px;
  line-height: 20px;
`

const Watermark = styled.g`
  fill: #fbf8f4;
  font-family: "Liberation Serif", "Noto Sans CJK SC", serif;
  font-size: 66px;
  filter: drop-shadow(2px 1px 0 #77706c);
`

const WatermarkHan = styled.text`
  font-family: "Noto Sans CJK SC", sans-serif;
  font-size: 80px;
  font-weight: 100;
`

const viewTools: [string, ReactNode][] = [
  ["Refit", <Magnifier size={20} frame />],
  ["Zoom In", <Magnifier size={20} sign="plus" />],
  ["Zoom Out", <Magnifier size={20} sign="minus" />],
  ["Repaint", <RepaintIcon />],
  ["Shading", <ShadeIcon />],
  ["Display Style", <BoxIcon size={22} />],
  ["Saved Orientations", <BoxIcon size={20} edge="#7fc3dd" badge="list" />],
  ["View Manager", <ManageViewsIcon size={20} />],
  ["Exploded View", <ExplodedIcon />],
  ["Clip in", <BoxIcon size={20} edge="#8cc4dc" badge="in" />],
  ["Clip fit", <BoxIcon size={20} edge="#8cc4dc" badge="fit" />],
  ["Perspective", <PerspectiveIcon size={20} />],
  ["Datum Display", <Datum kind="all" />],
  ["Planes", <Datum kind="plane" mark="eye" />],
  ["Axes", <Datum kind="axis" mark="eye" />],
  ["Points", <Datum kind="point" mark="eye" />],
  ["Coordinate Systems", <Datum kind="csys" mark="eye" />],
  ["Annotations", <Datum kind="note" mark="eye" />],
  ["Spin Center", <SpinCenterIcon />],
  ["Simulate", <RenderIcon />],
  ["Flow", <PipeIcon />],
]

const cut = "#a5b0c4"
const steel = "#8e8984"

// Each group is drawn at three times its size on screen
const Carburetor = () => (
  <>
    <defs>
      <linearGradient id="bore">
        <stop offset="0" stopColor="#65737b" />
        <stop offset=".35" stopColor="#8e9ba6" />
        <stop offset=".75" stopColor="#a9b5c1" />
        <stop offset="1" stopColor="#98a4b0" />
      </linearGradient>
      <linearGradient id="hole">
        <stop offset="0" stopColor="#5f6d78" />
        <stop offset=".6" stopColor="#9aa7b3" />
        <stop offset="1" stopColor="#a9b5c1" />
      </linearGradient>
      <linearGradient id="venturi">
        <stop offset="0" stopColor="#5d5b59" />
        <stop offset=".7" stopColor="#9a958f" />
        <stop offset="1" stopColor="#8a8580" />
      </linearGradient>
      <linearGradient id="pipe" x1="0" y1="0" x2="0" y2="1">
        <stop offset="0" stopColor="#5d6a74" />
        <stop offset=".4" stopColor="#99a5b1" />
        <stop offset=".52" stopColor="#f5f8fa" />
        <stop offset=".6" stopColor="#e9eef2" />
        <stop offset=".7" stopColor="#a3afbb" />
        <stop offset="1" stopColor="#929eab" />
      </linearGradient>
      <linearGradient id="horn" x1="0" y1="0" x2="0" y2="1">
        <stop offset="0" stopColor="#66737d" />
        <stop offset=".6" stopColor="#b4c1cd" />
        <stop offset="1" stopColor="#717e88" />
      </linearGradient>
      <linearGradient id="channel" x1="0" y1="0" x2="0" y2="1">
        <stop offset="0" stopColor="#7d8a96" />
        <stop offset=".5" stopColor="#f3f6f8" />
        <stop offset="1" stopColor="#8f9ba8" />
      </linearGradient>
      <linearGradient id="chamber">
        <stop offset="0" stopColor="#555f65" />
        <stop offset=".35" stopColor="#8d99a2" />
        <stop offset="1" stopColor="#b6c2cc" />
      </linearGradient>
      <linearGradient id="brass">
        <stop offset="0" stopColor="#74551b" />
        <stop offset=".5" stopColor="#c9922e" />
        <stop offset="1" stopColor="#b98427" />
      </linearGradient>
      <linearGradient id="dish" x1="0" y1="0" x2="0" y2="1">
        <stop offset="0" stopColor="#99492f" />
        <stop offset="1" stopColor="#d06b4b" />
      </linearGradient>
    </defs>

    {/* throttle body */}
    <g
      transform="translate(700 280) scale(.333333)"
      stroke="#2a22c4"
      strokeWidth="4"
      strokeLinejoin="round"
    >
      <path
        d="M175 66Q220 48 300 52L560 57Q640 60 700 75L940 118Q962 124 962 136L960 150L815 138L690 118L440 92L318 79Z"
        fill="#87939c"
        stroke="#333a40"
      />
      <path
        d="M217 68Q265 58 318 74L314 167Q265 155 217 165Z"
        fill="url(#hole)"
        stroke="#333a40"
      />
      <path
        d="M815 128Q860 116 913 130L910 225Q860 212 813 222Z"
        fill="url(#hole)"
        stroke="#333a40"
      />
      <path d="M175 66L217 68V167L171 163Z" fill={cut} />
      <path d="M915 136L962 141L958 239L911 232Z" fill={cut} />
      <path
        d="M440 92Q480 75 560 76Q680 78 697 106L680 600L668 760L650 985L412 965Z"
        fill="url(#bore)"
        stroke="#333a40"
      />
      <path
        d="M430 570Q520 550 620 562Q670 572 676 582V605L428 590Z"
        fill="#7f8b94"
        stroke="#333a40"
      />
      <path
        d="M600 530Q626 540 624 562L600 585L560 570V545Z"
        fill="#6b6d70"
        stroke="#27276a"
      />
      <path d="M551 505Q575 496 600 505V548H551Z" fill={steel} stroke="#4c4a47" />
      <path d="M551 508Q575 514 600 508" stroke="#4c4a47" fill="none" />
      <path
        d="M425 572L515 580V598L425 590ZM588 588L676 597V612L588 604Z"
        fill="#a7b0e2"
      />
      <circle cx="550" cy="593" r="39" fill="#a7b0e2" />
      <circle cx="550" cy="593" r="24" fill="#918c87" />
      <path
        d="M430 760Q550 736 668 760L642 850L620 915L624 968L545 985L452 965L462 905Z"
        fill="url(#venturi)"
        stroke="#333"
      />
      <path d="M460 906Q540 894 620 915" fill="none" stroke="#333" />
      <path
        d="M318 79L440 92L428 600L420 740L412 965L288 954L290 922L366 929L368 900L380 500L388 215Q388 182 350 180L314 175Z"
        fill={cut}
      />
      <path
        d="M693 115L815 128L813 223L765 220Q738 222 735 245L716 870Q730 895 755 898V912L665 902L668 760L680 560Z"
        fill={cut}
      />
      <path d="M421 740L445 830L462 905L452 965H412Z" fill="#9d9ba3" />
      <path d="M668 750L640 850L618 925L624 986L662 990Z" fill="#9d9ba3" />
    </g>

    {/* float chamber */}
    <g
      transform="translate(980 470) scale(.333333)"
      stroke="#2a22c4"
      strokeWidth="4"
      strokeLinejoin="round"
    >
      <path
        d="M90 150Q120 120 230 112Q420 100 570 135Q700 165 722 200L725 325L697 350L686 840L640 880L640 270L90 230Z"
        fill="#87939c"
        stroke="#333a40"
      />
      <path d="M700 340L688 820L655 880L668 350Z" fill="#49525a" stroke="none" />
      <path
        d="M435 98L465 90L498 96L497 128L465 132L436 124Z"
        fill="#77736d"
        stroke="#333"
      />
      <path d="M435 98L465 104L498 96M465 104V132" fill="none" stroke="#333" />
      <path
        d="M105 215L640 262L622 862L95 830Z"
        fill="url(#chamber)"
        stroke="#333a40"
      />
      <path
        d="M98 790Q220 745 290 745L270 800Q180 790 130 815Z"
        fill="#b1bcc7"
        stroke="none"
      />
      <path
        d="M430 760Q560 765 620 800L615 850L592 850Q570 800 445 805Z"
        fill="#b1bcc7"
        stroke="none"
      />
      <path
        d="M95 775Q220 730 330 738M385 740Q560 750 622 795M130 815Q200 785 270 790M445 800Q570 795 592 855"
        fill="none"
        stroke="#333a40"
      />
      <ellipse
        cx="465"
        cy="838"
        rx="18"
        ry="14"
        fill="#59636b"
        stroke="#333a40"
      />
      <path d="M105 165L640 215V262L105 215Z" fill={cut} />
      <path d="M328 140L425 145L410 358L328 355Z" fill={cut} />
      <path d="M205 225L243 230L245 345Q225 385 205 345Z" fill={cut} />
      <path d="M498 250L536 254L534 375Q512 415 494 375Z" fill={cut} />
      <path
        d="M225 355Q260 310 320 300L326 340Q280 345 250 370Z"
        fill="#7c7a76"
        stroke="#333"
      />
      <path
        d="M412 325Q440 305 470 320L580 395Q590 410 580 420L500 365L412 355Z"
        fill="#7c7a76"
        stroke="#333"
      />
      <circle cx="260" cy="352" r="14" fill="#a19c95" stroke="#333" />
      <circle cx="305" cy="328" r="17" fill="#a19c95" stroke="#333" />
      <circle cx="305" cy="328" r="8" fill="#9da8e8" />
      <circle cx="433" cy="342" r="19" fill="#a19c95" stroke="#333" />
      <circle cx="433" cy="342" r="9" fill="#9da8e8" />
      <path d="M205 312H244V345Q225 395 205 345Z" fill="#aab5dc" />
      <path d="M497 340H535V372Q512 415 494 372Z" fill="#aab5dc" />
      <path d="M205 322H244M496 350H535" stroke="#e9f0f8" strokeWidth="8" />
      {/* float */}
      <path
        d="M205 390Q360 365 500 388Q620 410 632 465L520 480L215 440Z"
        fill="#a8502f"
        stroke="#55221a"
      />
      <path
        d="M240 424Q300 400 400 405Q490 415 500 438Q470 465 400 470Q300 462 240 424Z"
        fill="url(#dish)"
        stroke="#55221a"
      />
      <path
        d="M108 415L148 410L150 378Q155 350 180 350Q210 352 210 385V418L240 424Q300 465 400 470Q460 465 520 448L525 415Q530 390 555 390Q585 395 585 425V458L620 462Q630 470 628 490L618 705Q600 720 485 703Q400 650 330 655Q280 660 235 680L102 662Z"
        fill="#bb6046"
      />
      <path d="M333 465H396L383 655H327Z" fill="#742f24" />
      <circle cx="179" cy="384" r="12" fill="#96a6ee" />
      <circle cx="556" cy="421" r="12" fill="#96a6ee" />
      {/* chamber walls and bottom */}
      <path
        d="M38 150L105 130V215L92 750L95 797Q100 820 130 825L235 830Q262 828 275 790L292 740Q300 722 325 724V838L340 874V980H325L285 1045L243 1040L247 935L268 928L272 895Q270 880 250 878L110 865Q90 862 75 850Q60 832 40 828L-453 780V740L90 790V742L0 735L-430 700L-265 670L-180 580L-128 590Q-125 690 0 695Q38 695 44 665L55 300Q50 285 36 283Z"
        fill={cut}
      />
      <path
        d="M388 730Q415 728 422 742L445 810Q455 850 480 853L585 862Q618 862 620 830L640 262V190H705L718 210L712 340L690 350L668 830Q650 905 600 912L440 900Q425 905 432 930L452 945V1060H410L370 980H363V874L385 838Z"
        fill={cut}
      />
      <path d="M340 874H363V980H340Z" fill="#8793a0" />
      <path d="M645 190H702V225H686L684 315L658 318L656 225H645Z" fill={steel} />
      <path d="M658 318L684 315V338Q670 355 658 338Z" fill={cut} />
      <path
        d="M640 268L656 272M686 272L722 268M36 212H105"
        stroke="#14146e"
        strokeWidth="10"
      />
      <path d="M40 145L70 128L103 130L105 160L85 165V205H45Z" fill="#96969f" />
      <path d="M45 220H90V265Q75 300 60 265L45 262Z" fill={cut} />
      {/* needle */}
      <path d="M354 70Q378 62 402 70L385 835L352 872L332 835Z" fill="#c8912f" />
      <path d="M354 70Q378 78 402 70" fill="none" stroke="#333" />
      <circle cx="371" cy="276" r="8" fill="#8f6415" />
      <path
        d="M325 838L332 835L352 872L385 835L388 730L385 838L363 878H340Z"
        fill="#c0c7ee"
      />
      {/* union nut */}
      <path
        d="M218 918Q235 900 272 908L265 928H218ZM430 908Q470 905 490 935L480 945L440 935Z"
        fill="#66625c"
        stroke="#333"
      />
      <path
        d="M240 1040L290 1046L300 1078L240 1070ZM408 1060H452V1092L395 1085Z"
        fill="#4d4d4e"
      />
      <path
        d="M218 918L247 925L240 1070L298 1078L296 1117L205 1108L182 1090L184 992L215 980Z"
        fill="#938e88"
      />
      <path
        d="M452 945L490 938L487 988L512 1020L508 1120L490 1135L390 1125L395 1085L452 1092Z"
        fill="#938e88"
      />
      <path
        d="M285 1045L325 980H370L410 1055L408 1085L393 1088L390 1183H383L380 1262L302 1255L302 1180L296 1175L300 1078L285 1065Z"
        fill="#cf9734"
      />
      <path d="M326 982Q348 970 370 982V1050H326Z" fill="url(#brass)" />
      <path
        d="M318 1048Q348 1038 378 1052L372 1255Q340 1245 312 1255Z"
        fill="url(#brass)"
      />
    </g>

    {/* air inlet, jet and set screw */}
    <g
      transform="translate(700 520) scale(.333333)"
      stroke="#2a22c4"
      strokeWidth="4"
      strokeLinejoin="round"
    >
      <path d="M118 20Q185 30 198 125L240 180L150 110Z" fill="#4f5356" stroke="#333" />
      <path
        d="M180 195L300 240Q335 350 280 480L150 515Q190 350 180 195Z"
        fill="url(#horn)"
        stroke="none"
      />
      <path
        d="M288 234L445 248L520 290V520L280 490Q340 360 300 240Z"
        fill="url(#pipe)"
        stroke="none"
      />
      <path d="M300 240Q338 355 280 478" fill="none" stroke="#1d2226" strokeWidth="8" />
      <path
        d="M445 248Q540 225 625 260L662 270L658 430Q650 515 590 520H560L500 300Z"
        fill="url(#bore)"
        stroke="none"
      />
      <path d="M572 370Q600 385 592 450L578 430Z" fill="#f1f4f6" stroke="none" />
      <path
        d="M445 248L505 292M575 362Q640 390 658 418M575 370L595 450"
        fill="none"
        stroke="#1d2226"
      />
      <path d="M150 590Q150 620 108 662L95 655L140 580Z" fill="#4f5356" stroke="none" />
      <path
        d="M105 20Q118 12 130 22Q150 100 210 150Q270 185 350 184L365 184V209L288 202L286 245Q230 235 170 180Q115 110 105 20Z"
        fill={cut}
      />
      <path
        d="M280 475Q210 475 150 525Q90 590 85 663H103Q115 620 155 575Q200 545 250 543L340 547L352 530L387 533V546L488 552L485 510L278 492Z"
        fill={cut}
      />
      <path
        d="M662 268L712 270L705 440Q715 540 840 545Q878 545 884 515L895 190L943 60L930 592L570 560V518L590 520Q655 505 658 430Z"
        fill={cut}
      />
      <path d="M455 545L575 560L930 592L935 640L450 597Z" fill="url(#channel)" />
      <path d="M395 543L450 548L446 595L392 588Z" fill="#857f7a" />
      <path
        d="M387 543H395L392 588L935 640L930 690L880 678L387 630Z"
        fill={cut}
        stroke="none"
      />
      <path d="M387 540V630L880 678M392 588L935 640" fill="none" />
      <path
        d="M515 225H558L578 445L603 462L600 488H570V565L488 558V478L458 475L460 450L490 440Z"
        fill={steel}
      />
      <path d="M528 250L548 248V565H520ZM540 225V565" fill="none" />
      <path
        d="M665 182L758 190L760 155L805 158Q825 190 822 235Q820 270 800 295L758 292L757 255L665 243Z"
        fill={cut}
      />
      <path
        d="M805 160Q830 225 803 293L812 280Q835 220 815 165Z"
        fill="#3f474d"
        stroke="none"
      />
      <path d="M826 172Q830 205 822 240" stroke="#3ddc3a" fill="none" />
      <path d="M822 243L885 247" stroke="#e03a3a" />
      <path d="M885 240L896 247L885 254Z" fill="#e03a3a" stroke="#e03a3a" />
      <circle cx="803" cy="255" r="8" fill="#4fe0ee" stroke="#4fe0ee" />
      <circle cx="826" cy="172" r="5" fill="#3ddc3a" stroke="#3ddc3a" />
    </g>
  </>
)

const GraphicsArea = () => (
  <Viewport>
    <Scene
      viewBox="354 205 1562 778"
      role="img"
      aria-label="Carburetor section view"
    >
      <Carburetor />
      <Watermark>
        <WatermarkHan x="576" y="566">
          莫西网
        </WatermarkHan>
        <text x="811" y="564">
          www
        </text>
        <text x="957" y="564">
          .
        </text>
        <text x="979" y="564">
          3dmox
        </text>
        <text x="1179" y="564">
          .
        </text>
        <text x="1223" y="564">
          com
        </text>
      </Watermark>
    </Scene>
    <FloatingBar role="toolbar" aria-label="Graphics">
      {viewTools.map(([label, icon]) => (
        <FloatingButton
          key={label}
          $on={label === "Spin Center"}
          aria-label={label}
        >
          {icon}
        </FloatingButton>
      ))}
    </FloatingBar>
    <ClippingState>Clipping State:A</ClippingState>
  </Viewport>
)

/* ---------- status bar ---------- */

const StatusBar = styled.footer`
  display: flex;
  height: 47px;
  padding: 6px 17px 6px 7px;
  border-top: 1px solid #b4b6b7;
  background: #fdfdfd;
`

const StatusIcons = styled.div`
  display: flex;
  align-items: center;
  align-self: flex-end;
  gap: 7px;
  height: 26px;
  padding-right: 12px;
  border-right: 1px solid #c9cbcc;
`

const StatusToggle = styled(ToggleButton)`
  width: 26px;
  height: 26px;
`

const Message = styled.p`
  flex: 1;
  margin: 0;
  padding: 3px 0 0 7px;
  font-size: 13px;
  line-height: 20px;

  &::before {
    content: "";
    display: inline-block;
    width: 6px;
    height: 6px;
    margin: 0 6px 3px 0;
    border-radius: 50%;
    background: #24587d;
  }
`

const StatusCell = styled.div<{ $width: number }>`
  width: ${({ $width }) => $width}px;
  height: 34px;
  border-left: 1px solid #d3d5d6;
`

const FindBox = styled.div`
  display: flex;
  height: 30px;
  margin: 0 4px 0 3px;
  border: 1px solid #c3c5c6;
`

const FindButton = styled(IconButton)<{ $menu?: boolean }>`
  width: ${({ $menu }) => ($menu ? "17px" : "33px")};
  ${({ $menu }) => $menu && "border-left: 1px solid #c3c5c6;"}
`

const SelectionButton = styled(IconButton)`
  width: 49px;
  height: 34px;
  border: 1px solid #a9acad;
`

const FilterBox = styled.div`
  display: grid;
  grid-template-columns: 1fr 20px;
  width: 218px;
  height: 28px;
  margin: 3px 0 0 118px;
  border: 1px solid #9fa3a5;
  background: #f9f9f9;
`

const FilterSelect = styled.select`
  grid-area: 1 / 1 / 2 / 3;
  appearance: none;
  padding-left: 8px;
`

const FilterArrow = styled.span`
  display: grid;
  grid-area: 1 / 2;
  place-items: center;
  border-left: 1px solid #9fa3a5;
  pointer-events: none;
`

/* ---------- taskbar ---------- */

const Taskbar = styled.div`
  display: flex;
  height: 46px;
  padding-right: 25px;
  background: linear-gradient(
    90deg,
    #dcdcbc,
    #d8d9c4 25%,
    #d3d5d3 55%,
    #d4d5d5 85%,
    #d9d9cc
  );
  color: #1c1c1c;
`

const TaskButton = styled.button<{ $wide?: boolean; $active?: boolean }>`
  display: grid;
  place-items: center;
  width: ${({ $wide }) => ($wide ? "62px" : "60px")};
  padding-top: 3px;
  ${({ $active }) => $active && "background: #efefe9;"}
`

const Tray = styled.div`
  display: flex;
  align-items: center;
  gap: 12px;
  padding-top: 4px;
  font-size: 15px;
`

const Clock = styled.time`
  padding: 0 10px 0 2px;
  text-align: center;
  line-height: 23px;
`

const StartIcon = () => (
  <Svg size={22}>
    <path
      d="M1 5l9-1v8H1zM11 4l12-2v10H11zM1 13h9v8l-9-1zM11 13h12v10l-12-2z"
      fill="#000"
    />
  </Svg>
)

const SearchIcon = () => (
  <Svg size={22}>
    <circle cx="15" cy="9" r="7" stroke="#111" strokeWidth="1.5" />
    <path d="M10 14l-8 9" stroke="#111" strokeWidth="1.5" />
  </Svg>
)

const CortanaIcon = () => (
  <Svg size={22}>
    <circle cx="12" cy="12" r="9" stroke="#000" strokeWidth="3" />
  </Svg>
)

const EdgeIcon = () => (
  <Svg size={30}>
    <defs>
      <linearGradient id="edge" x1="0" y1="0" x2="1" y2="0">
        <stop offset="0" stopColor="#1c8fd6" />
        <stop offset="1" stopColor="#55c95a" />
      </linearGradient>
    </defs>
    <path
      d="M1 12a11 11 0 0 1 22-2q1 6-5 6-5 0-3-3 0-5-5-5-7 0-9 4z"
      fill="url(#edge)"
    />
    <path
      d="M1 12q2-5 7-5 4 0 5 3-5 0-5 5 1 6 8 6 3 0 5-2-4 5-10 4T1 12z"
      fill="#0f5ea9"
    />
  </Svg>
)

const StoreIcon = () => (
  <Svg size={30}>
    <path d="M7 7V2h10v5" stroke="#222" strokeWidth="2" />
    <path d="M1 7h22l-1 16H2z" fill="#262626" />
    <path d="M7 10h4v4H7z" fill="#e8502a" />
    <path d="M12 10h5v4h-5z" fill="#7cb82f" />
    <path d="M7 15h4v4H7z" fill="#2ba3de" />
    <path d="M12 15h5v4h-5z" fill="#f5b81c" />
  </Svg>
)

const MailIcon = () => (
  <Svg size={30}>
    <path d="M0 8l12-7 12 7v15H0z" fill="#1565a8" />
    <path d="M0 8l12 8 12-8v15H0z" fill="#2a9be4" />
    <path d="M3 9h18l-9 7z" fill="#f3f8fb" />
    <path d="M12 16l12 7H0z" fill="#41adf0" />
  </Svg>
)

const ChromeIcon = () => (
  <Svg size={28}>
    <circle cx="12" cy="12" r="11" fill="#f7c52b" />
    <path d="M2 7a11 11 0 0 1 20 0H12a5 5 0 0 0-5 5z" fill="#d9402f" />
    <path d="M2 7l6 9q2 2 5 1l-3 6A11 11 0 0 1 2 7z" fill="#2e9e4f" />
    <circle cx="12" cy="12" r="5" fill="#fff" />
    <circle cx="12" cy="12" r="4" fill="#3c7de0" />
  </Svg>
)

const taskItems: [string, ReactNode][] = [
  ["Edge", <EdgeIcon />],
  ["Store", <StoreIcon />],
  ["Mail", <MailIcon />],
  ["Chrome", <ChromeIcon />],
  ["Creo Parametric", <CreoCube size={30} />],
]

const App = () => (
  <Page>
    <GlobalStyle />
    <TitleBar>
      <TitleSide>
        <Brand>
          <CreoCube />
          creo·
        </Brand>
        <QuickTools>
          {quickTools.map(({ label, icon, narrow }) => (
            <QuickButton key={label} $narrow={narrow} aria-label={label}>
              {icon}
            </QuickButton>
          ))}
        </QuickTools>
        <QuickButton aria-label="Customize toolbar">
          <Svg size={12} box={12}>
            <path d="M1 1h10v2H1zM1 5h10l-5 6z" fill="#3f4345" />
          </Svg>
        </QuickButton>
      </TitleSide>
      <Title>CARBURETOR-MAIN_ASSEMBLY (Active) - Creo Parametric 6.0</Title>
      <TitleSide $end>
        <WindowButton aria-label="Minimize">
          <Svg size={12} box={12}>
            <path d="M1 9h10" stroke="#55595b" strokeWidth="2" />
          </Svg>
        </WindowButton>
        <WindowButton aria-label="Restore">
          <Svg size={14} box={14}>
            <path d="M4 5V2h9v7h-3M1 6h9v6H1zM4 3h9M1 7h9" stroke="#55595b" />
          </Svg>
        </WindowButton>
        <WindowButton aria-label="Close">
          <Svg size={12} box={12}>
            <path d="M1 1l10 10M11 1L1 11" stroke="#55595b" strokeWidth="2" />
          </Svg>
        </WindowButton>
      </TitleSide>
    </TitleBar>

    <TabBar>
      <RibbonTab $variant="file">File</RibbonTab>
      <RibbonTab>Model</RibbonTab>
      <RibbonTab>Analysis</RibbonTab>
      <RibbonTab>Live Simulation</RibbonTab>
      <RibbonTab>Annotate</RibbonTab>
      <RibbonTab>Manikin</RibbonTab>
      <RibbonTab>Tools</RibbonTab>
      <RibbonTab $variant="active">View</RibbonTab>
      <RibbonTab>Framework</RibbonTab>
      <RibbonTab>Applications</RibbonTab>
      <Spacer />
      <TabBarTools>
        <TabBarButton aria-label="Collapse ribbon">
          <Svg size={14} box={14}>
            <path d="M1 8l6-6 6 6v2H10L7 7l-3 3H1z" fill="#fff" />
          </Svg>
        </TabBarButton>
        <TabBarButton aria-label="Command search">
          <Svg size={18}>
            <circle cx="14" cy="10" r="7" fill="#d4d7d8" stroke="#8f9496" />
            <path d="M1 22l4-4 6 1" stroke="#c7cacb" strokeWidth="2" />
          </Svg>
        </TabBarButton>
        <TabBarButton aria-label="Learning">
          <Svg size={16}>
            <path d="M12 2l12 6-12 6L0 8z" fill="#fff" />
            <path d="M4 12l8 5 8-5v6l-8 5-8-5z" fill="#fff" />
          </Svg>
        </TabBarButton>
        <Caret $color="#fff" />
        <TabBarButton aria-label="Help">?</TabBarButton>
      </TabBarTools>
    </TabBar>

    <RibbonGroups />

    <Workspace>
      <ModelTree />
      <GraphicsArea />
    </Workspace>

    <StatusBar>
      <StatusIcons>
        <StatusToggle $on aria-label="Model tree">
          <TreeIcon size={20} />
        </StatusToggle>
        <IconButton aria-label="Browser">
          <GlobeIcon />
        </IconButton>
        <IconButton aria-label="Full screen">
          <BlankIcon />
        </IconButton>
      </StatusIcons>
      <Message>CARBURETOR-MAIN_ASSEMBLY has been saved.</Message>
      <StatusCell $width={35} />
      <StatusCell $width={49} />
      <StatusCell $width={1} />
      <FindBox>
        <FindButton aria-label="Find">
          <BinocularsIcon />
        </FindButton>
        <FindButton $menu aria-label="Find options">
          <Caret />
        </FindButton>
      </FindBox>
      <SelectionButton aria-label="Selection">
        <LayeredBoxIcon />
      </SelectionButton>
      <FilterBox>
        <FilterSelect aria-label="Selection filter" defaultValue="Geometry">
          <option>Geometry</option>
        </FilterSelect>
        <FilterArrow>
          <Caret />
        </FilterArrow>
      </FilterBox>
    </StatusBar>

    <Taskbar>
      <TaskButton aria-label="Start">
        <StartIcon />
      </TaskButton>
      <TaskButton aria-label="Search">
        <SearchIcon />
      </TaskButton>
      <TaskButton $wide aria-label="Cortana">
        <CortanaIcon />
      </TaskButton>
      {taskItems.map(([label, icon]) => (
        <TaskButton
          key={label}
          $wide
          $active={label === "Creo Parametric"}
          aria-label={label}
        >
          {icon}
        </TaskButton>
      ))}
      <Spacer />
      <Tray>
        <Svg size={18}>
          <path d="M2 16l10-9 10 9" stroke="#111" strokeWidth="2" />
        </Svg>
        <Svg size={20}>
          <path d="M6 8h15v10H4v-6" fill="#111" stroke="#111" />
          <path d="M22 11h2v4h-2zM0 4h6v4H0z" fill="#111" />
          <path d="M1 1v3M5 1v3M3 8v8h2" stroke="#111" strokeWidth="1.5" />
        </Svg>
        <Svg size={20}>
          <path
            d="M1 9h4l6-6v18l-6-6H1zM14 9q2 3 0 6M17 6q4 6 0 12M20 3q6 9 0 18"
            stroke="#111"
            strokeWidth="1.5"
          />
        </Svg>
        <Svg size={18}>
          <path
            d="M3 22Q4 4 22 3M8 22Q9 10 22 9M13 22q1-7 9-7"
            stroke="#111"
            strokeWidth="1.5"
          />
          <circle cx="20" cy="20" r="2" fill="#111" />
        </Svg>
        <span>ENG</span>
        <Clock>
          11:33 AM
          <br />
          27-08-2020
        </Clock>
        <Svg size={22}>
          <path d="M2 3h20v15h-6l-3 4-3-4H2z" stroke="#111" strokeWidth="1.5" />
        </Svg>
      </Tray>
    </Taskbar>
  </Page>
)

export default App
